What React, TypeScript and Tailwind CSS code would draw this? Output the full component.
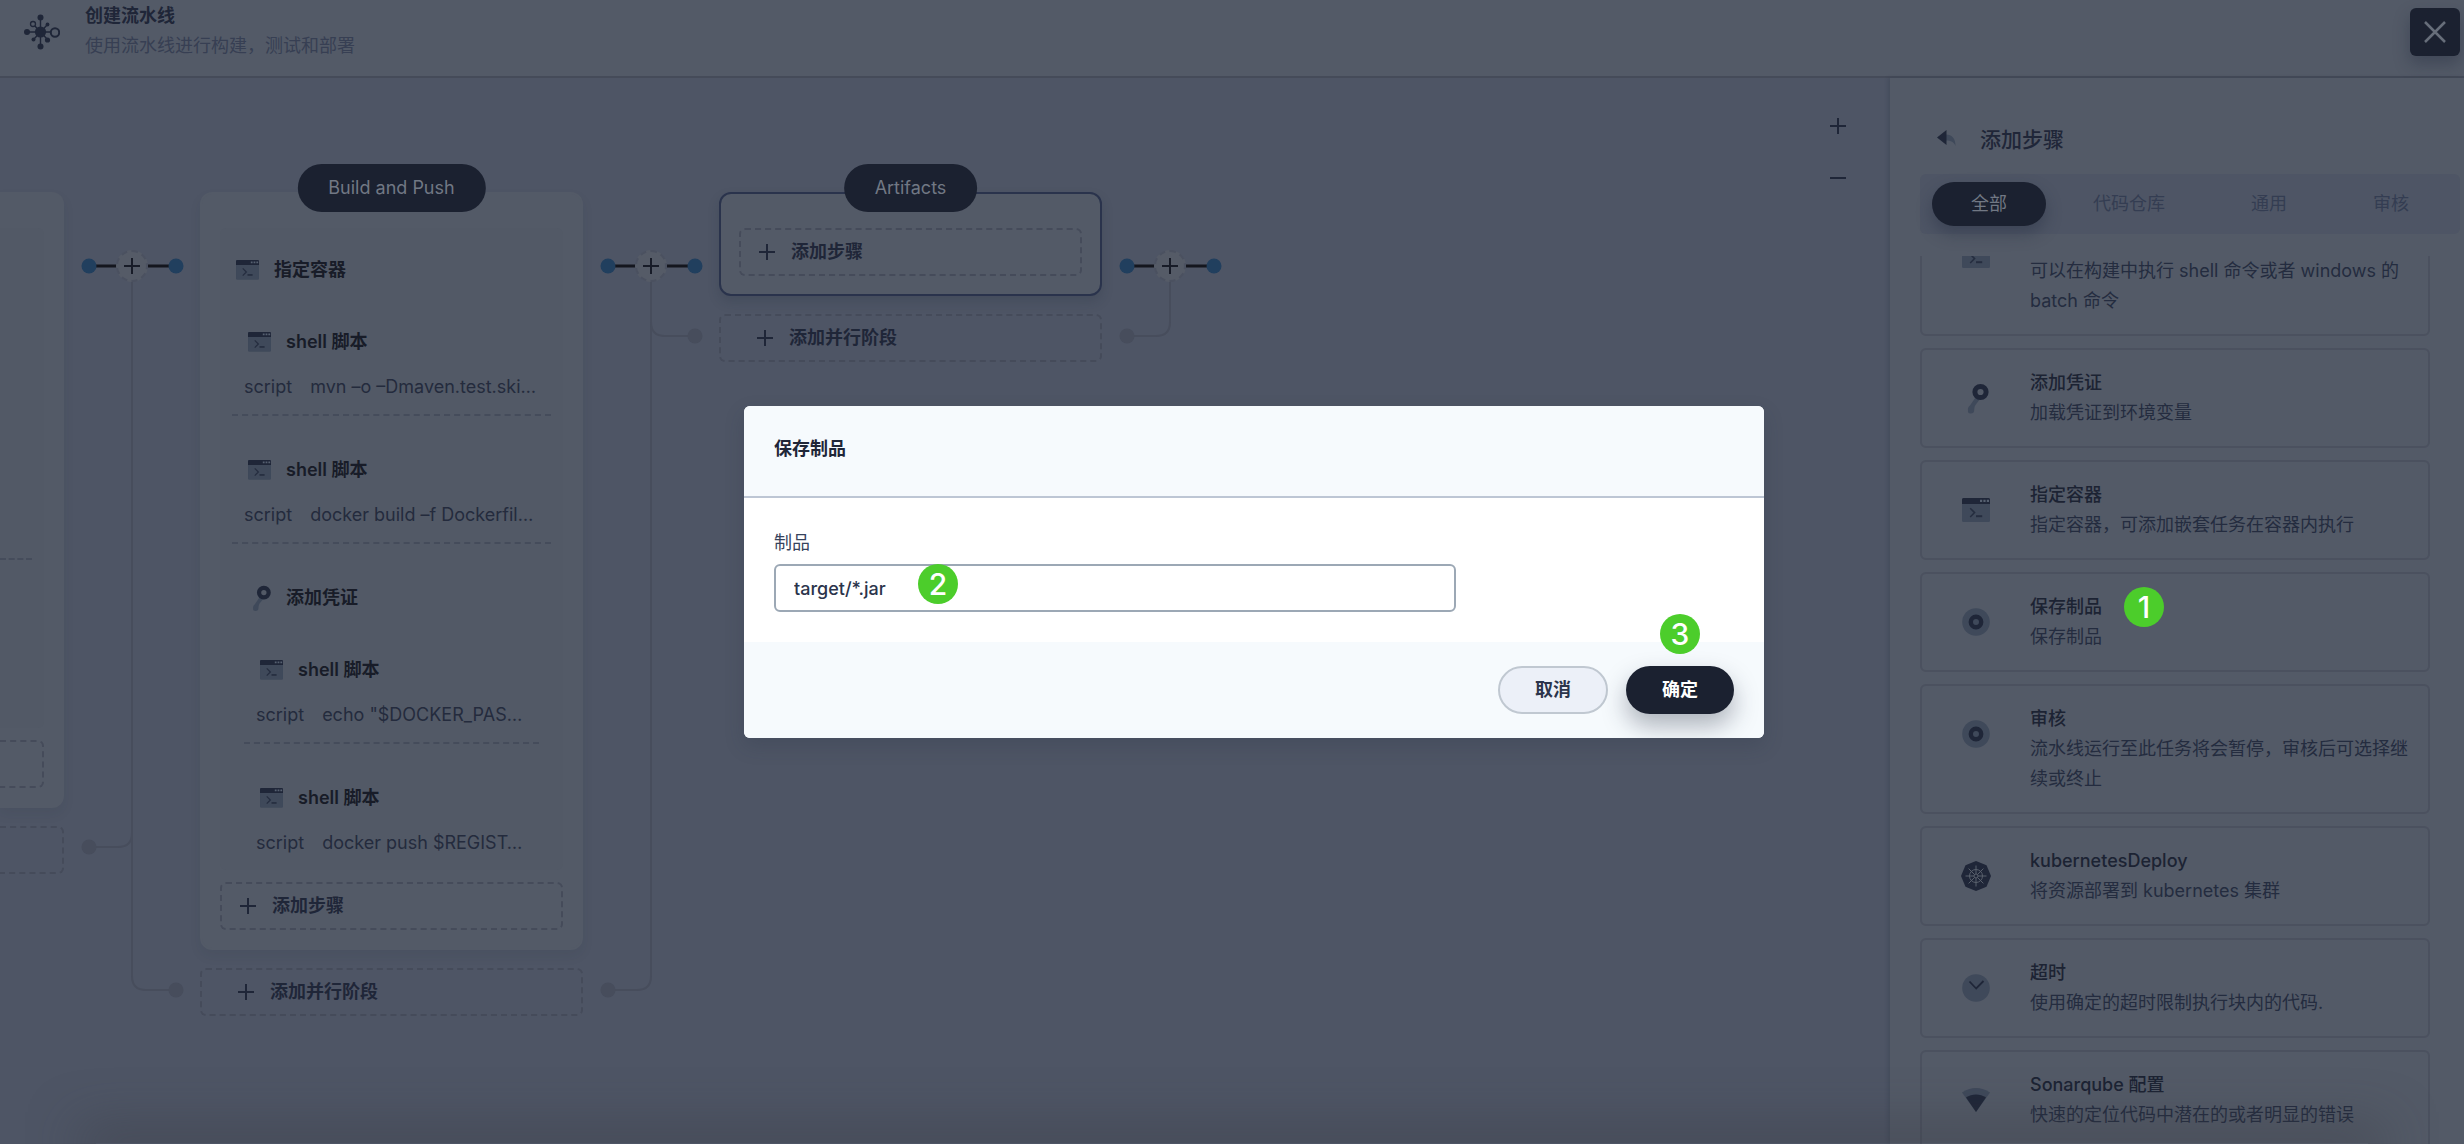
import type { ReactNode } from 'react';
import { clsx } from 'clsx';

type IconProps = { className?: string };

function TerminalIcon({ className }: IconProps) {
  return (
    <svg viewBox="0 0 28 24" className={className} aria-hidden="true">
      <rect width="28" height="24" rx="1.5" fill="#3f495a" />
      <path d="M1.5 0h25A1.5 1.5 0 0 1 28 1.5V6H0V1.5A1.5 1.5 0 0 1 1.5 0Z" fill="#1f2638" />
      <path d="M18 1.8h2.2v2.2H18zM21.4 1.8h2.2v2.2h-2.2zM24.8 1.8H27v2.2h-2.2z" fill="#566070" />
      <path d="M8.2 10.2l4.4 4.4-4.4 4.4" fill="none" stroke="#252d3f" strokeWidth="1.5" />
      <path d="M14 18.2h6.2" stroke="#252d3f" strokeWidth="2" />
    </svg>
  );
}

function KeyIcon({ className }: IconProps) {
  return (
    <svg viewBox="0 0 28 32" className={className} aria-hidden="true">
      <path d="M13.5 15.5 8 23.5a5 5 0 0 0-2 5c-.4 2 .6 3 2.6 3 2.6 0 3.6-1.4 3.6-3.6.2-2.6.6-4.4 2-5.9l4.3-5.5Z" fill="#3f495a" />
      <circle cx="18.5" cy="10" r="5.6" fill="none" stroke="#1f2638" strokeWidth="5" />
    </svg>
  );
}

function RecordIcon({ className }: IconProps) {
  return (
    <svg viewBox="0 0 28 28" className={className} aria-hidden="true">
      <circle cx="14" cy="14" r="13.8" fill="#3f495a" />
      <circle cx="14" cy="14" r="5.2" fill="none" stroke="#1f2638" strokeWidth="4.4" />
    </svg>
  );
}

function KubernetesIcon({ className }: IconProps) {
  return (
    <svg viewBox="0 0 30 30" className={className} aria-hidden="true">
      <path d="M15 0l10.5 4.3L30 15l-4.5 10.7L15 30 4.5 25.7 0 15 4.5 4.3Z" fill="#1f2638" />
      <g fill="none" stroke="#59606c" strokeWidth="1">
        <circle cx="15" cy="15" r="6.5" />
        <circle cx="15" cy="15" r="2" />
        <path d="M15 4.5v8.5M15 17v8.5M4.5 15H13M17 15h8.5M7.6 7.6l6 6M16.4 16.4l6 6M22.4 7.6l-6 6M13.6 16.4l-6 6" />
      </g>
    </svg>
  );
}

function TimeoutIcon({ className }: IconProps) {
  return (
    <svg viewBox="0 0 28 28" className={className} aria-hidden="true">
      <circle cx="14" cy="14" r="13.8" fill="#3f495a" />
      <path d="M7.5 7.5l6.7 7 7.3-7.5" fill="none" stroke="#1f2638" strokeWidth="1.8" />
    </svg>
  );
}

function SonarIcon({ className }: IconProps) {
  return (
    <svg viewBox="0 0 28 24" className={className} aria-hidden="true">
      <path d="M0 4.5C8.5-1.5 19.5-1.5 28 4.5L14 24Z" fill="#3f495a" />
      <path d="M4 9.6c6-4.3 14-4.3 20 0L14 24Z" fill="#1f2638" />
    </svg>
  );
}

function PipelineIcon({ className }: IconProps) {
  return (
    <svg viewBox="0 0 36 36" className={className} aria-hidden="true">
      <path d="M16.5 4v28M3 18h23M10 11l13 14M23 11 10 25" stroke="#1f2638" strokeWidth="1.4" />
      <g fill="#1f2638">
        <circle cx="16.5" cy="18" r="5.6" />
        <circle cx="16.5" cy="3.5" r="3" />
        <circle cx="16.5" cy="32.5" r="3" />
        <circle cx="3" cy="18" r="3" />
        <circle cx="23.5" cy="10.5" r="1.9" />
        <circle cx="9.5" cy="25.5" r="2" />
        <circle cx="23.5" cy="26" r="2.6" />
      </g>
      <circle cx="9" cy="10" r="2.5" fill="#535a67" stroke="#1f2638" strokeWidth="1.3" />
      <circle cx="31" cy="18.5" r="4.2" fill="#535a67" stroke="#1f2638" strokeWidth="2" />
    </svg>
  );
}

function PlusIcon({ className }: IconProps) {
  return (
    <svg viewBox="0 0 16 16" className={className} stroke="currentColor" strokeWidth="2" aria-hidden="true">
      <path d="M8 0v16M0 8h16" />
    </svg>
  );
}

type PipelineStep = {
  title: string;
  icon?: 'terminal' | 'key';
  script?: string;
  children?: PipelineStep[];
};

const containerStep: PipelineStep = {
  title: '指定容器',
  children: [
    { title: 'shell 脚本', script: 'mvn –o –Dmaven.test.ski…' },
    { title: 'shell 脚本', script: 'docker build –f Dockerfil…' },
    {
      title: '添加凭证',
      icon: 'key',
      children: [
        { title: 'shell 脚本', script: 'echo "$DOCKER_PAS…' },
        { title: 'shell 脚本', script: 'docker push $REGIST…' },
      ],
    },
  ],
};

const tabs = ['全部', '代码仓库', '通用', '审核'];

const stepTypes = [
  { id: 'shell', title: '', desc: '可以在构建中执行 shell 命令或者 windows 的 batch 命令', icon: <TerminalIcon className="w-7" /> },
  { id: 'credential', title: '添加凭证', desc: '加载凭证到环境变量', icon: <KeyIcon className="w-7" /> },
  { id: 'container', title: '指定容器', desc: '指定容器，可添加嵌套任务在容器内执行', icon: <TerminalIcon className="w-7" /> },
  { id: 'artifact', title: '保存制品', desc: '保存制品', icon: <RecordIcon className="w-7" />, marker: 1 },
  { id: 'input', title: '审核', desc: '流水线运行至此任务将会暂停，审核后可选择继续或终止', icon: <RecordIcon className="w-7" /> },
  { id: 'kubernetes', title: 'kubernetesDeploy', desc: '将资源部署到 kubernetes 集群', icon: <KubernetesIcon className="w-[30px]" /> },
  { id: 'timeout', title: '超时', desc: '使用确定的超时限制执行块内的代码.', icon: <TimeoutIcon className="w-7" /> },
  { id: 'sonar', title: 'Sonarqube 配置', desc: '快速的定位代码中潜在的或者明显的错误', icon: <SonarIcon className="w-7" /> },
];

function Marker({ n, className }: { n: number; className: string }) {
  return (
    <span
      className={clsx(
        'absolute grid size-10 place-items-center rounded-full bg-[#4ccd2b] text-3xl font-medium text-white',
        className,
      )}
    >
      {n}
    </span>
  );
}

function StepNode({ step }: { step: PipelineStep }) {
  return (
    <>
      <div className="flex h-9 items-center pl-4 font-semibold text-[#181c28]">
        <span className="grid w-[38px] justify-items-start">
          {step.icon === 'key' ? <KeyIcon className="w-6" /> : <TerminalIcon className="w-[23px]" />}
        </span>
        {step.title}
      </div>
      {step.script ? (
        <p className="flex h-[54px] items-center gap-[18px] pl-3 whitespace-nowrap text-[#242b3d]">
          <span>script</span>
          <span>{step.script}</span>
        </p>
      ) : null}
      {step.children ? (
        <ul className="px-3">
          {step.children.map((child, i) => (
            <li
              key={i}
              className={clsx('pt-9', child.script && 'border-b-2 border-dashed border-[#454c5b] last:border-b-0')}
            >
              <StepNode step={child} />
            </li>
          ))}
        </ul>
      ) : null}
    </>
  );
}

function AddButton({ wide, children }: { wide?: boolean; children: ReactNode }) {
  return (
    <button
      type="button"
      className={clsx(
        'flex h-12 w-full items-center gap-4 rounded-md border-2 border-dashed border-[#454b5a] font-semibold text-[#1f2638]',
        wide ? 'pl-9' : 'pl-[18px]',
      )}
    >
      <PlusIcon className="size-4" />
      {children}
    </button>
  );
}

function Stage({ name, active, children }: { name: string; active?: boolean; children?: ReactNode }) {
  return (
    <div className="flex w-[383px] flex-none flex-col gap-[18px]">
      <section
        className={clsx(
          'relative flex flex-col gap-3 rounded-xl border-2 bg-[#535a67] px-[18px] pt-[34px] pb-[18px]',
          active
            ? 'border-[#2a334c] shadow-[0_6px_12px_rgba(30,38,56,0.18)]'
            : 'border-[#535a67] shadow-[0_6px_12px_rgba(30,38,56,0.08)]',
        )}
      >
        <h2 className="absolute -top-[30px] left-1/2 flex h-12 -translate-x-1/2 items-center rounded-full bg-[#1b2130] px-[31px] whitespace-nowrap text-[#717884]">
          {name}
        </h2>
        {children}
        <AddButton>添加步骤</AddButton>
      </section>
      <AddButton wide>添加并行阶段</AddButton>
    </div>
  );
}

/** Link between two stages; left and right are the depths of the parallel branches. */
function Connector({ left, right }: { left?: number; right?: number }) {
  return (
    <div className="relative w-[136px] flex-none">
      <svg width="136" height="820" viewBox="0 0 136 820" fill="none" aria-hidden="true">
        <g stroke="#474d5c" strokeWidth="2">
          {left ? <path d={`M68 88V${left - 14}q0 14-14 14H25`} /> : null}
          {right ? <path d={`M68 88V${right - 14}q0 14 14 14H112`} /> : null}
        </g>
        {left ? <circle cx="25" cy={left} r="7.5" fill="#474d5c" /> : null}
        {right ? <circle cx="112" cy={right} r="7.5" fill="#474d5c" /> : null}
        <path d="M25 74h28M84 74h28" stroke="#14161e" strokeWidth="3" />
        <circle cx="25" cy="74" r="7.5" fill="#213f5e" />
        <circle cx="112" cy="74" r="7.5" fill="#213f5e" />
      </svg>
      <button
        type="button"
        aria-label="添加阶段"
        className="absolute top-[58px] left-[52px] grid size-8 place-items-center rounded-full border-2 border-dashed border-[#4b5160] bg-[#555b67] text-[#181c28]"
      >
        <PlusIcon className="size-4" />
      </button>
    </div>
  );
}

function Canvas() {
  return (
    <main className="relative min-w-0 flex-1 overflow-hidden bg-[#4e5565] pt-[114px]">
      <div className="flex items-start">
        <div className="flex w-16 flex-none flex-col gap-[18px]">
          <div className="flex flex-col gap-3 rounded-r-xl bg-[#535a67] pt-9 pr-5 pb-5 shadow-[0_6px_12px_rgba(30,38,56,0.08)]">
            <div className="h-[500px] rounded-r-md bg-[#525966] pr-3">
              <div className="h-[332px] border-b-2 border-dashed border-[#454c5b]" />
            </div>
            <div className="h-12 rounded-r-md border-2 border-l-0 border-dashed border-[#454b5a]" />
          </div>
          <div className="h-12 rounded-r-md border-2 border-l-0 border-dashed border-[#454b5a]" />
        </div>
        <Connector left={655} right={798} />
        <Stage name="Build and Push">
          <div className="rounded-md bg-[#525966] pt-6">
            <StepNode step={containerStep} />
          </div>
        </Stage>
        <Connector left={798} right={144} />
        <Stage name="Artifacts" active />
        <Connector left={144} />
      </div>
      <div className="absolute top-7 right-8 flex flex-col gap-3 text-[#1f2638]">
        <button type="button" aria-label="放大" className="grid size-10 place-items-center">
          <PlusIcon className="size-4" />
        </button>
        <button type="button" aria-label="缩小" className="grid size-10 place-items-center">
          <span className="h-0.5 w-4 bg-[#1f2638]" />
        </button>
      </div>
    </main>
  );
}

function StepPanel() {
  return (
    <aside className="relative flex w-[574px] flex-none flex-col bg-[#535a67] pl-[30px] shadow-[-2px_0_4px_rgba(30,38,56,0.2)]">
      <div className="flex h-24 items-end pl-[17px]">
        <button type="button" aria-label="返回" className="mr-6 mb-7">
          <svg width="19" height="16" viewBox="0 0 19 16" aria-hidden="true">
            <path d="M9 4.5c6 0 9.5 4 9.5 11.5C17 12 14 10.5 9 10.5Z" fill="#3f495a" />
            <path d="M0 7.5 9.5 0v15Z" fill="#1f2638" />
          </svg>
        </button>
        <h2 className="mb-[18px] text-[21px] leading-8 font-medium text-[#1f2638]">添加步骤</h2>
      </div>
      <div role="tablist" className="mr-1 flex h-[60px] flex-none items-center gap-2 rounded-md bg-[#4e5565] px-3">
        {tabs.map((tab, i) => (
          <button
            key={tab}
            type="button"
            role="tab"
            aria-selected={i === 0}
            className={clsx(
              'h-11 rounded-full px-[39px] whitespace-nowrap',
              i === 0 ? 'bg-[#1b2130] text-[#717884] shadow-[0_8px_16px_rgba(30,38,56,0.35)]' : 'text-[#343d52]',
            )}
          >
            {tab}
          </button>
        ))}
      </div>
      <div className="mt-[22px] min-h-0 flex-1 overflow-hidden">
        <ul className="-mt-[50px] mr-[34px] flex flex-col gap-3">
          {stepTypes.map((item) => (
            <li key={item.id} className="flex items-start rounded-md border-2 border-[#4b515f] p-[18px]">
              <span className="grid h-[60px] w-[90px] flex-none place-items-center pr-[18px]">{item.icon}</span>
              <div className="min-w-0 leading-[30px] text-[#242c3f]">
                <h3 className="h-[30px] font-medium text-[#1c2333]">
                  <span className="relative">
                    {item.title}
                    {item.marker ? <Marker n={item.marker} className="top-1/2 left-full ml-[22px] -translate-y-1/2" /> : null}
                  </span>
                </h3>
                <p>{item.desc}</p>
              </div>
            </li>
          ))}
        </ul>
      </div>
    </aside>
  );
}

function ArtifactDialog() {
  return (
    <div className="absolute inset-0 flex items-center justify-center pl-11">
      <form
        role="dialog"
        aria-labelledby="dialog-title"
        className="w-[1020px] max-w-full overflow-hidden rounded-md bg-white shadow-[0_8px_20px_rgba(36,46,66,0.2)]"
      >
        <header className="border-b-2 border-[#bdc6d4] bg-[#f6fafd] px-[30px] pt-7 pb-8">
          <h2 id="dialog-title" className="leading-[30px] font-semibold text-[#1f2638]">
            保存制品
          </h2>
        </header>
        <div className="p-[30px]">
          <label htmlFor="artifact" className="mb-1.5 block leading-[30px] text-[#36435c]">
            制品
          </label>
          <div className="relative w-[71%]">
            <input
              id="artifact"
              type="text"
              defaultValue="target/*.jar"
              className="h-12 w-full rounded-md border-2 border-[#9ca8b5] bg-white px-[18px] font-medium text-[#2b344b] outline-none"
            />
            <Marker n={2} className="top-0 left-36" />
          </div>
        </div>
        <footer className="flex justify-end gap-[18px] bg-[#f6fafd] px-[30px] py-6 font-semibold">
          <button type="button" className="h-12 w-[110px] rounded-full border-2 border-[#c0c8d1] bg-[#ecf0f8] text-[#2b344b]">
            取消
          </button>
          <div className="relative">
            <button type="submit" className="h-12 w-[108px] rounded-full bg-[#1b2130] text-white shadow-[0_12px_24px_rgba(36,46,66,0.35)]">
              确定
            </button>
            <Marker n={3} className="bottom-full left-1/2 mb-3 -translate-x-1/2" />
          </div>
        </footer>
      </form>
    </div>
  );
}

export default function App() {
  return (
    <div className="relative flex h-screen flex-col overflow-hidden bg-[#4e5565] font-[Inter,'Noto_Sans_CJK_SC',sans-serif] text-lg">
      <header className="flex h-[78px] flex-none items-start border-b-2 border-[#454b59] bg-[#535a67] pl-6">
        <PipelineIcon className="mt-3.5 size-9" />
        <div className="ml-[25px] flex-1 pt-px leading-[30px]">
          <h1 className="font-semibold text-[#1f2638]">创建流水线</h1>
          <p className="text-[#373f53]">使用流水线进行构建，测试和部署</p>
        </div>
        <button
          type="button"
          aria-label="关闭"
          className="mt-2 mr-1 grid h-12 w-[50px] place-items-center rounded-md bg-[#1b2130] shadow-[0_8px_16px_rgba(30,38,56,0.35)]"
        >
          <svg viewBox="0 0 22 22" className="size-[22px]" stroke="#676e7a" strokeWidth="2.5" aria-hidden="true">
            <path d="M1 1l20 20M21 1 1 21" />
          </svg>
        </button>
      </header>
      <div className="flex min-h-0 flex-1">
        <Canvas />
        <StepPanel />
      </div>
      <div className="pointer-events-none absolute right-24 bottom-0 left-24 h-px shadow-[0_0_50px_16px_rgba(58,60,68,0.5)]" />
      <ArtifactDialog />
    </div>
  );
}
